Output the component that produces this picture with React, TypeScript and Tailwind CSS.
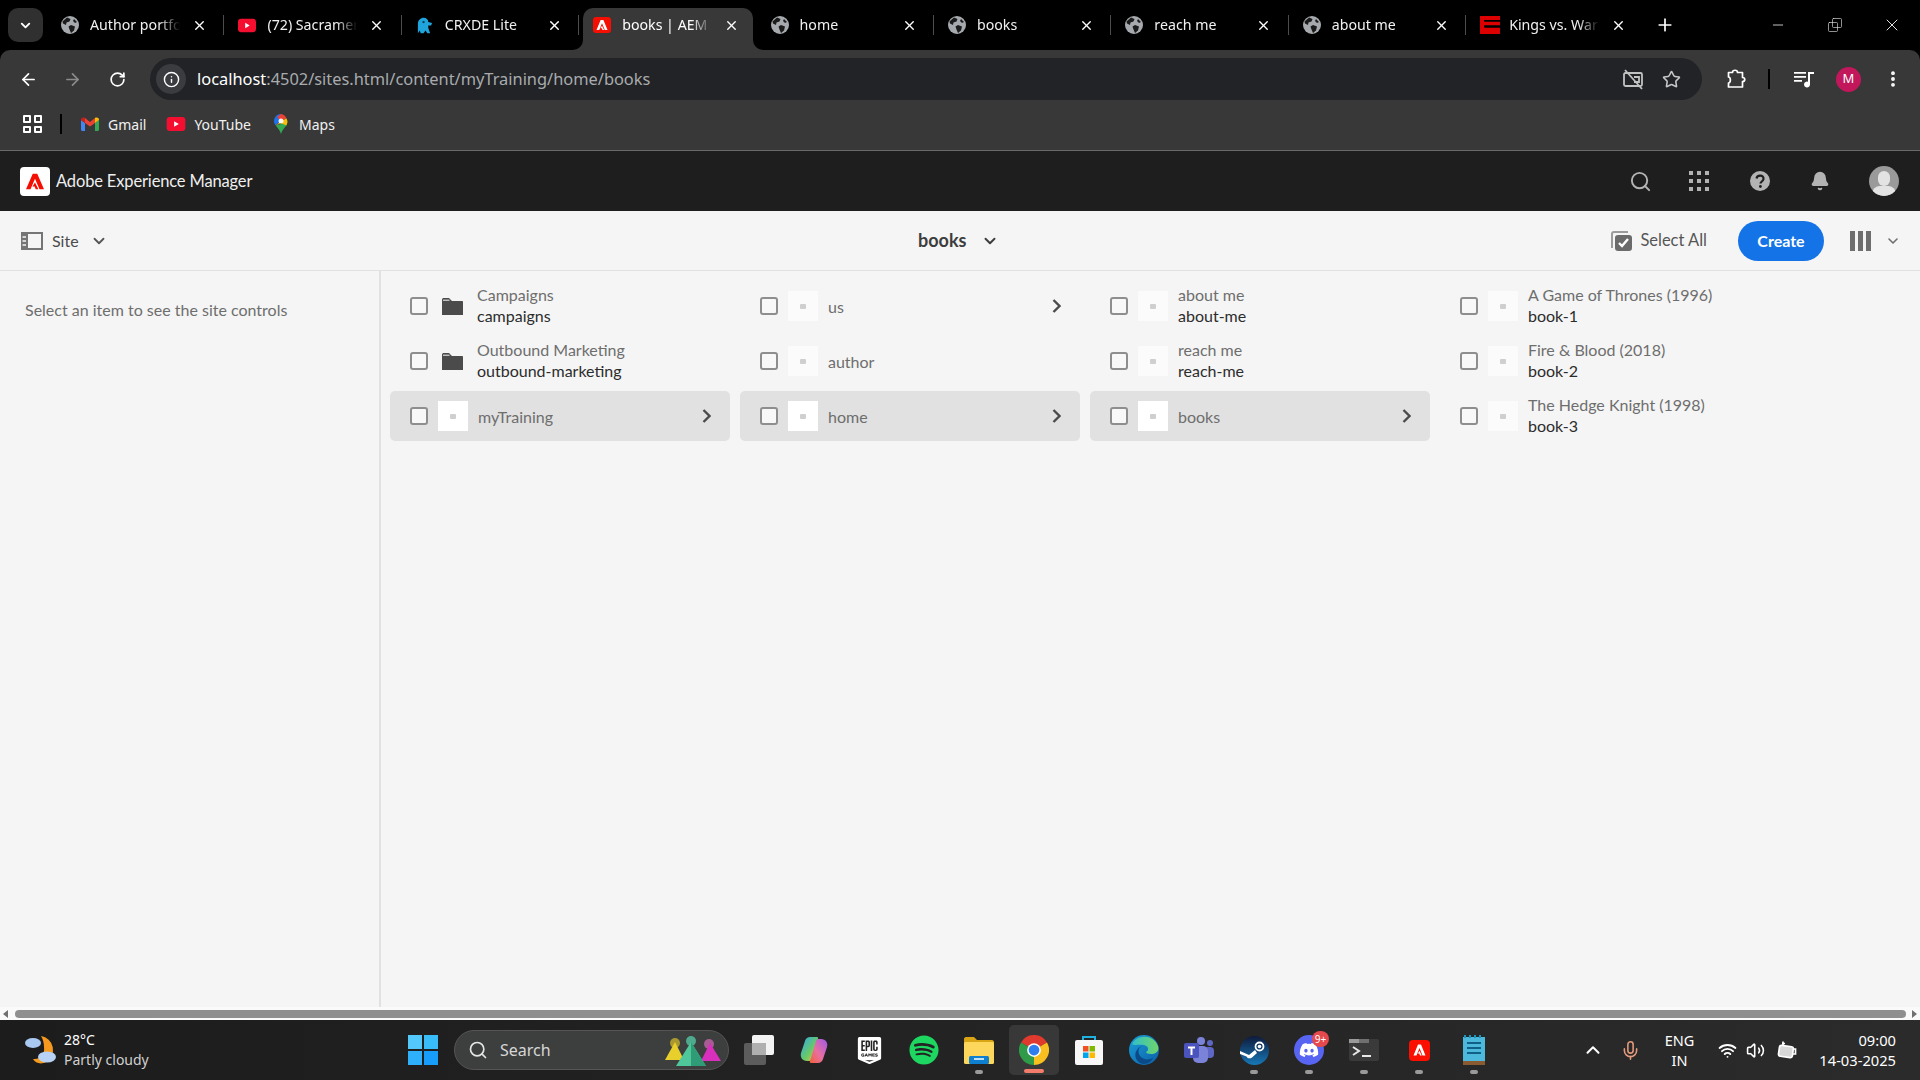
import { ArrowLeft, ArrowRight, ChevronDown, ChevronUp, Info, Mic, Minus, Plus, RotateCw, Search, Star, Volume2, Wifi, X, Bell, EllipsisVertical, Square } from "lucide-react";
import { FaDiscord, FaSpotify } from "react-icons/fa";
import { SiEpicgames } from "react-icons/si";

const ADOBE = "M9 1h6l9 22h-6L12 8 6 23H0ZM12 13.500 16.500 23H13l-1.500-4h-3Z";

function Globe() {
  return (
    <svg width="18" height="18" viewBox="0 0 18 18">
      <circle cx="9" cy="9" r="9" fill="#a6a9ad" />
      <path d="M6 1.5 9.5 3 8.5 5.5 5.5 6.5 5 9 2 7.5 1.5 5.5ZM10 9l4 1.5-1 4-3 2.5-1.5-3.5L7.5 10.5ZM13 3l3 3-2 1-2-2Z" fill="#1b1b1b" />
    </svg>
  );
}

function YouTubeIcon({ w = 18, h = 15 }: { w?: number; h?: number }) {
  return (
    <svg width={w} height={h} viewBox="0 0 20 15">
      <rect width="20" height="15" rx="3.5" fill="#f40f30" />
      <path d="M8 4.5v6l5-3z" fill="#fff" />
    </svg>
  );
}

function CrxIcon() {
  return (
    <svg width="17" height="17" viewBox="0 0 18 20" preserveAspectRatio="none">
      <path d="M2 19V8c0-4 3-7 6-7s5 2 5 5l4 1-1 3-3 0v3l2 6h-3l-2-3-2 3H5l-1-3z" fill="#1fa4dc" />
      <circle cx="8" cy="6" r="1.3" fill="#0b3a52" />
    </svg>
  );
}

function AdobeFavicon() {
  return (
    <svg width="18" height="16" viewBox="0 0 18 16">
      <rect width="18" height="16" rx="3" fill="#f40f02" />
      <path transform="translate(3.500 2.500) scale(.46)" d={ADOBE} fill="#fff" />
    </svg>
  );
}

function EspnIcon() {
  return (
    <svg width="20" height="18" viewBox="0 0 20 18">
      <path d="M0 0h20v4H5v1.500h15v4H5v2h15v6.500H0Z" fill="#d00" />
      <path d="M4 4h16v1.500H4zM4 9.500h16v2H4z" fill="#000" />
    </svg>
  );
}

const tabs = [
  { title: "Author portfolio", icon: <Globe /> },
  { title: "(72) Sacramento", icon: <YouTubeIcon /> },
  { title: "CRXDE Lite", icon: <CrxIcon /> },
  { title: "books | AEM Sites", icon: <AdobeFavicon />, active: true },
  { title: "home", icon: <Globe /> },
  { title: "books", icon: <Globe /> },
  { title: "reach me", icon: <Globe /> },
  { title: "about me", icon: <Globe /> },
  { title: "Kings vs. Warriors", icon: <EspnIcon /> },
];

function Tab({ title, icon, active, last }: { title: string; icon: React.ReactNode; active?: boolean; last: boolean }) {
  return (
    <div className={`relative flex h-[42px] w-[177.4px] shrink-0 items-center pb-[8px] pl-[14px] ${active ? "text-white" : "text-[#f1f1f1]"}`}>
      {active && (
        <>
          <div className="absolute inset-y-0 left-[4px] right-[4px] rounded-t-[10px] bg-[#383838]" />
          <svg className="absolute bottom-0 left-[-6px]" width="10" height="10" viewBox="0 0 10 10"><path d="M10 0V10H0A10 10 0 0 0 10 0Z" fill="#383838" /></svg>
          <svg className="absolute bottom-0 right-[-6px]" width="10" height="10" viewBox="0 0 10 10"><path d="M0 0V10H10A10 10 0 0 1 0 0Z" fill="#383838" /></svg>
        </>
      )}
      <div className="relative flex w-[22px] shrink-0 items-center">{icon}</div>
      <div className="relative ml-[7px] w-[92px] overflow-hidden whitespace-nowrap text-[14.2px] [mask-image:linear-gradient(to_right,black_75%,transparent_98%)]">{title}</div>
      <X size={15} strokeWidth={2.2} className="relative ml-[10px] text-white" />
      {!last && !active && <div className="absolute right-0 top-[7px] h-[20px] w-px bg-[#4d4d4d]" />}
    </div>
  );
}

function TopBars() {
  return (
    <div className="bg-black">
      <div className="flex h-[50px] items-end">
        <div className="mb-[8px] ml-[8px] mr-[4px] flex h-[34px] w-[35px] items-center justify-center rounded-[10px] bg-[#303030]">
          <ChevronDown size={15} strokeWidth={3} className="text-white" />
        </div>
        {tabs.map((t, i) => (
          <Tab key={i} title={t.title} icon={t.icon} active={t.active} last={i === tabs.length - 1} />
        ))}
        <Plus size={20} strokeWidth={2} className="mb-[15px] ml-[11px] text-white" />
        <div className="mb-[15px] ml-auto flex items-center text-[#e0e0e0]">
          <Minus size={16} strokeWidth={1.3} className="mr-[1px]" />
          <div className="relative ml-[40px] h-[16px] w-[16px]">
            <Square size={12} strokeWidth={1.3} className="absolute bottom-0 left-0" />
            <Square size={12} strokeWidth={1.3} className="absolute right-0 top-0" />
          </div>
          <X size={20} strokeWidth={1.2} className="ml-[39px] mr-[18px]" />
        </div>
      </div>
      <div className="rounded-t-[10px] bg-[#383838]">
        <div className="flex h-[50px] items-end">
          <div className="flex h-[50px] w-[150px] items-center pl-[19px] pt-[8px] text-white">
            <ArrowLeft size={19} strokeWidth={2.2} />
            <ArrowRight size={19} strokeWidth={2.2} className="ml-[25px] text-[#8b8b8b]" />
            <RotateCw size={17} strokeWidth={2.4} className="ml-[27px]" />
          </div>
          <div className="flex h-[42px] w-[1552px] items-center rounded-full bg-[#212326] pl-[6px] pr-[21px]">
            <div className="flex h-[30px] w-[30px] items-center justify-center rounded-full bg-[#3a3c40]">
              <Info size={17} strokeWidth={2} className="text-white" />
            </div>
            <div className="ml-[11px] text-[16.4px] text-[#a9abae]">
              <span className="text-white">localhost</span>:4502/sites.html/content/myTraining/home/books
            </div>
            <svg className="ml-auto" width="22" height="22" viewBox="0 0 22 22" fill="none" stroke="#c2c2c2" strokeWidth="1.8">
              <rect x="2" y="5" width="18" height="13" rx="1.500" />
              <path d="M12 14h5V9h-5" />
              <path d="M3 2l17 19" />
            </svg>
            <Star size={19} strokeWidth={2} className="ml-[18px] text-[#c7c7c7]" />
          </div>
          <div className="flex h-[50px] flex-1 items-center pl-[25px] pt-[8px] text-white">
            <svg width="20" height="20" viewBox="0 0 20 20" fill="none" stroke="#fff" strokeWidth="1.700">
              <path d="M1.500 3.500h4c0-3 5-3 5 0h5v5c3 0 3 4 0 4v5.500h-14v-4c2.500 0 2.500-6 0-6z" strokeLinejoin="round" />
            </svg>
            <div className="ml-[21px] h-[20px] w-[2px] bg-black" />
            <svg className="ml-[24px]" width="20" height="18" viewBox="0 0 20 18" fill="#fff">
              <path d="M0 2h12v1.700H0zM0 6h12v1.700H0zM0 10h8v1.700H0zM14 2h6v2h-4v10.500a3 3 0 1 1-2-2.800z" />
            </svg>
            <div className="ml-[22px] flex h-[25px] w-[25px] items-center justify-center rounded-full bg-[#c2185b] text-[13px] text-white">M</div>
            <EllipsisVertical size={20} strokeWidth={2.6} className="ml-[22px]" />
          </div>
        </div>
        <div className="flex h-[50px] items-center pb-[2px] text-[14px] text-[#f1f1f1]">
          <div className="ml-[23px] grid h-[18px] w-[19px] grid-cols-2 gap-[3px]">
            <div className="rounded-[1px] border-2 border-white" />
            <div className="rounded-[1px] border-2 border-white" />
            <div className="rounded-[1px] border-2 border-white" />
            <div className="rounded-[1px] border-2 border-white" />
          </div>
          <div className="ml-[18px] h-[20px] w-[2px] bg-black" />
          <svg className="ml-[19px]" width="18" height="14" viewBox="0 0 18 14">
            <path d="M0 3v9.500c0 .8.700 1.500 1.500 1.500H4V6z" fill="#4285f4" />
            <path d="M14 6v8h2.500c.8 0 1.500-.7 1.500-1.500V3z" fill="#34a853" />
            <path d="M4 6 9 9.500 14 6V1L9 5 4 1z" fill="#ea4335" />
            <path d="M14 1v5l4-3c0-2.500-2.500-3-4-2z" fill="#fbbc04" />
            <path d="M4 1v5L0 3c0-2.500 2.500-3 4-2z" fill="#c5221f" />
          </svg>
          <span className="ml-[9px]">Gmail</span>
          <div className="ml-[20px]"><YouTubeIcon w={20} h={14} /></div>
          <span className="ml-[8px]">YouTube</span>
          <svg className="ml-[23px]" width="14" height="20" viewBox="0 0 14 20">
            <path d="M7 0a7 7 0 0 0-5.300 11.500L7 6z" fill="#1a73e8" />
            <path d="M7 0 3 3l4 4 5.500-2.500A7 7 0 0 0 7 0z" fill="#ea4335" />
            <path d="M12.500 4.500 7 10l-5.300 1.500C4 14.500 6 16 7 20c1-4 3-5.500 5.300-8.500a7 7 0 0 0 .2-7z" fill="#34a853" />
            <path d="M1.700 11.500 7 7l5.500-2.500a7 7 0 0 1-.2 7L7 9z" fill="#fbbc04" />
            <circle cx="7" cy="7" r="2.500" fill="#f7f7f7" />
          </svg>
          <span className="ml-[11px]">Maps</span>
        </div>
      </div>
    </div>
  );
}

function AemHeader() {
  return (
    <div className="flex h-[61px] items-center border-t border-[#6a6a6a] bg-[#1e1e1e] pl-[20px] font-['Lato',sans-serif] text-white">
      <div className="flex h-[29px] w-[30px] items-center justify-center rounded-[4px] bg-white">
        <svg width="18" height="17" viewBox="0 0 24 24" fill="#f40f02" preserveAspectRatio="none"><path d={ADOBE} /></svg>
      </div>
      <span className="ml-[6px] text-[16.5px] tracking-[-0.15px] text-[#efefef]">Adobe Experience Manager</span>
      <div className="ml-auto flex items-center text-[#b3b3b3]">
        <Search size={23} strokeWidth={2} />
        <div className="ml-[37px] grid grid-cols-3 gap-[4px]">
          {[0, 1, 2, 3, 4, 5, 6, 7, 8].map((i) => (
            <div key={i} className="h-[4px] w-[4px] bg-[#b3b3b3]" />
          ))}
        </div>
        <svg className="ml-[41px]" width="20" height="20" viewBox="0 0 20 20">
          <circle cx="10" cy="10" r="10" fill="#b3b3b3" />
          <path d="M6.500 7.500C7 3.500 14 3.500 13.500 8c-.3 2.500-3 2.500-3 4.500" fill="none" stroke="#1e1e1e" strokeWidth="2.200" />
          <circle cx="10.400" cy="15.500" r="1.400" fill="#1e1e1e" />
        </svg>
        <Bell size={20} fill="#b3b3b3" strokeWidth={2} className="ml-[40px]" />
        <div className="relative ml-[39px] mr-[21px] h-[30px] w-[30px] overflow-hidden rounded-full bg-[#9a9a9a]">
          <div className="absolute left-[9px] top-[5px] h-[15px] w-[12px] rounded-full bg-[#e3e3e3]" />
          <div className="absolute left-[3px] top-[20px] h-[16px] w-[24px] rounded-full bg-[#e3e3e3]" />
        </div>
      </div>
    </div>
  );
}

function AemToolbar() {
  return (
    <div className="flex h-[60px] items-center border-b border-[#e1e1e1] bg-[#f5f5f5] font-['Lato',sans-serif] text-[16px] text-[#4b4b4b]">
      <div className="flex w-[800px] items-center pl-[21px]">
        <svg width="22" height="18" viewBox="0 0 22 18">
          <rect x="1" y="1" width="20" height="16" fill="none" stroke="#757575" strokeWidth="2" />
          <rect x="0" y="0" width="7" height="18" fill="#757575" />
          <path d="M1.500 5h3.500M1.500 9h3.500M1.500 13h3.500" stroke="#f5f5f5" strokeWidth="1.500" />
        </svg>
        <span className="ml-[9px]">Site</span>
        <ChevronDown size={18} strokeWidth={2.4} className="ml-[11px] text-[#555]" />
      </div>
      <div className="ml-[118px] flex items-center text-[18px] font-bold text-[#3d3d3d]">
        <span>books</span>
        <ChevronDown size={18} strokeWidth={2.6} className="ml-[15px]" />
      </div>
      <div className="ml-auto flex items-center">
        <svg width="21" height="20" viewBox="0 0 21 20">
          <path d="M1 17V3c0-1.200.8-2 2-2h14" fill="none" stroke="#9b9b9b" strokeWidth="2" />
          <rect x="4" y="4" width="17" height="16" rx="3" fill="#6b6b6b" />
          <path d="M8 12l3 3 6-7" fill="none" stroke="#fff" strokeWidth="2.400" />
        </svg>
        <span className="ml-[8px] text-[16.5px] text-[#555]">Select All</span>
        <div className="ml-[31px] flex h-[40px] w-[86px] items-center justify-center rounded-full bg-[#1473e6] text-[16px] font-bold text-white">Create</div>
        <div className="ml-[26px] flex h-[20px] w-[21px] justify-between">
          <div className="w-[5px] bg-[#6e6e6e]" />
          <div className="w-[5px] bg-[#6e6e6e]" />
          <div className="w-[5px] bg-[#6e6e6e]" />
        </div>
        <ChevronDown size={16} strokeWidth={2.4} className="ml-[14px] mr-[19px] text-[#6e6e6e]" />
      </div>
    </div>
  );
}

type Item = { title: string; name?: string; folder?: boolean; active?: boolean; more?: boolean };

const columns: Item[][] = [
  [
    { title: "Campaigns", name: "campaigns", folder: true },
    { title: "Outbound Marketing", name: "outbound-marketing", folder: true },
    { title: "myTraining", active: true, more: true },
  ],
  [
    { title: "us", more: true },
    { title: "author" },
    { title: "home", active: true, more: true },
  ],
  [
    { title: "about me", name: "about-me" },
    { title: "reach me", name: "reach-me" },
    { title: "books", active: true, more: true },
  ],
  [
    { title: "A Game of Thrones (1996)", name: "book-1" },
    { title: "Fire & Blood (2018)", name: "book-2" },
    { title: "The Hedge Knight (1998)", name: "book-3" },
  ],
];

function Row({ item }: { item: Item }) {
  return (
    <div className={`relative flex h-[50px] items-center rounded-[5px] pl-[20px] ${item.active ? "bg-[#e1e1e1]" : ""}`}>
      <div className="h-[18px] w-[18px] rounded-[3px] border-2 border-[#8e8e8e] bg-[#f8f8f8]" />
      {item.folder ? (
        <svg className="ml-[14px] mr-[4px]" width="21" height="18" viewBox="0 0 21 18">
          <path d="M0 3c0-1.500.7-2 2-2h5l3 3h10c.6 0 1 .4 1 1v13H0z" fill="#4b4b4b" />
          <path d="M1 3.200h6.500" stroke="#f5f5f5" strokeWidth="1" />
        </svg>
      ) : (
        <div className={`ml-[10px] flex h-[30px] w-[30px] items-center justify-center ${item.active ? "bg-white" : "bg-[#fbfbfb]"}`}>
          <div className="h-[5px] w-[6px] rounded-[1px] bg-[#cfcfcf]" />
        </div>
      )}
      <div className={`ml-[10px] text-[16px] leading-[21px] ${item.name ? "-mt-[2px]" : ""}`}>
        <div className="text-[#6e6e6e]">{item.title}</div>
        {item.name && <div className="text-[#2c2c2c]">{item.name}</div>}
      </div>
      {item.more && (
        <svg className="ml-auto mr-[19px]" width="9" height="14" viewBox="0 0 9 14" fill="none" stroke="#4b4b4b" strokeWidth="2.400">
          <path d="M1.500 1l6 6-6 6" />
        </svg>
      )}
    </div>
  );
}

function ColumnView() {
  return (
    <div className="flex min-h-0 flex-1 bg-[#f5f5f5] font-['Lato',sans-serif]">
      <div className="w-[381px] border-r-2 border-[#e1e1e1] pl-[25px] pt-[28px] text-[16px] leading-[22px] text-[#6e6e6e]">
        Select an item to see the site controls
      </div>
      <div className="flex gap-[10px] pl-[9px] pt-[10px]">
        {columns.map((col, i) => (
          <div key={i} className="flex w-[340px] flex-col gap-[5px]">
            {col.map((item, j) => (
              <Row key={j} item={item} />
            ))}
          </div>
        ))}
      </div>
    </div>
  );
}

function ScrollBar() {
  return (
    <div className="flex h-[13px] items-center bg-[#fafafa]">
      <div className="ml-[3px] h-0 w-0 border-y-[4px] border-r-[5px] border-y-transparent border-r-[#707070]" />
      <div className="ml-[7px] h-[8px] flex-1 rounded-full bg-[#8f8f8f]" />
      <div className="ml-[6px] mr-[3px] h-0 w-0 border-y-[4px] border-l-[5px] border-y-transparent border-l-[#707070]" />
    </div>
  );
}

function Weather() {
  return (
    <svg width="32" height="32" viewBox="0 0 32 32">
      <path d="M17 2a14 14 0 0 1 5 26c-5 3-11 1-13-3 8 1 12-6 11-12 0-4-1-8-3-11z" fill="#f59a1f" />
      <ellipse cx="9" cy="9" rx="8" ry="5" fill="#a9c8f2" />
      <ellipse cx="23" cy="23" rx="9" ry="5.500" fill="#b8d2f5" />
    </svg>
  );
}

function WinLogo() {
  return (
    <div className="grid h-[30px] w-[30px] grid-cols-2 gap-[2px]">
      <div className="bg-[#53c8fb]" />
      <div className="bg-[#38bdf9]" />
      <div className="bg-[#2fb0fa]" />
      <div className="bg-[#169efa]" />
    </div>
  );
}

function Pyramids() {
  return (
    <svg width="58" height="32" viewBox="0 0 58 32">
      <circle cx="11" cy="9" r="5" fill="#a8982f" />
      <path d="M11 8 1 26h19z" fill="#e8cf2b" />
      <circle cx="45" cy="10" r="5" fill="#a85c94" />
      <path d="M46 9 37 27h20z" fill="#d92fbd" />
      <circle cx="27" cy="7" r="5" fill="#4fa98c" />
      <path d="M27 8 12 32h30z" fill="#4fc79b" />
      <path d="M27 8 27 32h15z" fill="#2f9c77" />
    </svg>
  );
}

function TaskView() {
  return (
    <div className="relative h-[30px] w-[30px]">
      <div className="absolute left-0 top-[8px] h-[22px] w-[22px] rounded-[2px] bg-[#5c5c5c]" />
      <div className="absolute right-0 top-0 h-[20px] w-[22px] rounded-[2px] bg-[#f3f3f3]" />
      <div className="absolute left-[8px] top-[8px] h-[12px] w-[14px] bg-[#b0b0b0]" />
    </div>
  );
}

function Copilot() {
  return (
    <svg width="28" height="28" viewBox="0 0 28 28">
      <defs>
        <linearGradient id="cp1" x1="0" y1="0" x2="1" y2="1">
          <stop offset="0" stopColor="#2fa8f0" />
          <stop offset=".55" stopColor="#66c96a" />
          <stop offset="1" stopColor="#f2c23c" />
        </linearGradient>
        <linearGradient id="cp2" x1="1" y1="0" x2="0" y2="1">
          <stop offset="0" stopColor="#a058e8" />
          <stop offset=".55" stopColor="#e86fa0" />
          <stop offset="1" stopColor="#f2603c" />
        </linearGradient>
      </defs>
      <path d="M10 1h7c1 0 1.500 1 1 2l-6 20c-.5 1.500-2 2-3 2H7c-5 0-7-4-6-8l4-12c.6-2.500 3-4 5-4z" fill="url(#cp1)" />
      <path d="M18 27h-7c-1 0-1.500-1-1-2l6-20c.5-1.500 2-2 3-2h2c5 0 7 4 6 8l-4 12c-.6 2.500-3 4-5 4z" fill="url(#cp2)" />
    </svg>
  );
}

function FolderApp() {
  return (
    <svg width="30" height="27" viewBox="0 0 30 27">
      <path d="M0 2c0-1 .8-2 2-2h8l3 3h15c1 0 2 1 2 2v2H0z" fill="#d9a514" />
      <rect x="0" y="5" width="30" height="22" rx="1.500" fill="#fcd75c" />
      <rect x="5" y="19" width="20" height="8" rx="1.500" fill="#0f7fd0" />
      <rect x="10" y="21" width="10" height="2" fill="#bfe0f7" />
    </svg>
  );
}

function Chrome() {
  return (
    <svg width="30" height="30" viewBox="0 0 24 24">
      <path d="M12 12 1.600 6A12 12 0 0 1 22.400 6Z" fill="#e0392d" />
      <path d="M12 12 22.400 6A12 12 0 0 1 12 24Z" fill="#f7bf1f" />
      <path d="M12 12 12 24A12 12 0 0 1 1.600 6Z" fill="#2f9a47" />
      <circle cx="12" cy="12" r="5.500" fill="#fff" />
      <circle cx="12" cy="12" r="4.300" fill="#2f7ef0" />
    </svg>
  );
}

function Store() {
  return (
    <svg width="30" height="30" viewBox="0 0 30 30">
      <path d="M9 6V2h12v4" fill="none" stroke="#1fb2e0" strokeWidth="2" />
      <rect x="1" y="5" width="28" height="25" rx="2" fill="#f7f7f7" />
      <rect x="9" y="11" width="5.500" height="5.500" fill="#f25022" />
      <rect x="15.500" y="11" width="5.500" height="5.500" fill="#7fba00" />
      <rect x="9" y="17.500" width="5.500" height="5.500" fill="#00a4ef" />
      <rect x="15.500" y="17.500" width="5.500" height="5.500" fill="#ffb900" />
    </svg>
  );
}

function Edge() {
  return (
    <svg width="30" height="30" viewBox="0 0 30 30">
      <defs>
        <linearGradient id="edge1" x1="0" y1="0" x2="1" y2="1">
          <stop offset="0" stopColor="#1a9fd8" />
          <stop offset="1" stopColor="#0c5ea8" />
        </linearGradient>
        <linearGradient id="edge2" x1="0" y1="0" x2="1" y2="0">
          <stop offset="0" stopColor="#32c0c8" />
          <stop offset="1" stopColor="#6fd46a" />
        </linearGradient>
      </defs>
      <circle cx="15" cy="15" r="15" fill="url(#edge1)" />
      <path d="M3 9C7 0 24-2 29 11c1.500 5-2 8-7 8-3 0-5-1-5-2 3-1 3-6-2-7C10 9 5 11 3 9z" fill="url(#edge2)" />
      <path d="M14 11c-5 1-6 7-2 11 3 3 8 3 12 1-3 6-9 7-13 5-5-3-6-9-3-13 2-3 4-4 6-4z" fill="#0b4a86" />
    </svg>
  );
}

function Teams() {
  return (
    <svg width="30" height="26" viewBox="0 0 30 26">
      <circle cx="17" cy="4" r="4" fill="#7b83d9" />
      <circle cx="26" cy="6" r="3" fill="#5f67c4" />
      <rect x="20" y="10" width="10" height="11" rx="4" fill="#5f67c4" />
      <rect x="9" y="9" width="15" height="17" rx="5" fill="#7b83d9" />
      <rect x="0" y="6" width="15" height="15" rx="2" fill="#4b53bc" />
      <path d="M4 9.500h7v2H8.500V18h-2v-6.500H4z" fill="#fff" />
    </svg>
  );
}

function Steam() {
  return (
    <svg width="29" height="29" viewBox="0 0 29 29">
      <defs>
        <linearGradient id="stm" x1="0" y1="0" x2="0" y2="1">
          <stop offset="0" stopColor="#0f1a3a" />
          <stop offset="1" stopColor="#1678b8" />
        </linearGradient>
      </defs>
      <circle cx="14.500" cy="14.500" r="14.500" fill="url(#stm)" />
      <circle cx="19.500" cy="10.500" r="4" fill="none" stroke="#fff" strokeWidth="1.800" />
      <circle cx="19.500" cy="10.500" r="1.800" fill="#fff" />
      <path d="M0 15l9 4 6-5 2 3-5 4.500c-2 1.500-4.500 1-5.500-1L0 18z" fill="#fff" />
    </svg>
  );
}

function Terminal() {
  return (
    <svg width="30" height="22" viewBox="0 0 30 22">
      <rect width="30" height="22" rx="2" fill="#3a3a3a" />
      <rect width="20" height="4" fill="#9a9a9a" />
      <rect x="10" width="10" height="4" fill="#707070" />
      <path d="M4 8l6 4-6 4" fill="none" stroke="#e8e8e8" strokeWidth="2" />
      <path d="M13 17h9" stroke="#e8e8e8" strokeWidth="2" />
    </svg>
  );
}

function AcrobatApp() {
  return (
    <div className="flex h-[21px] w-[21px] items-center justify-center rounded-[4px] bg-[#fa0f00]">
      <svg width="13" height="12" viewBox="0 0 24 24" fill="#fff"><path d={ADOBE} /></svg>
    </div>
  );
}

function Notepad() {
  return (
    <svg width="22" height="30" viewBox="0 0 22 30">
      <rect y="2" width="22" height="26" fill="#4cb8dc" />
      <rect y="26" width="22" height="4" fill="#8a5a30" />
      <path d="M4 8h14M4 13h14M4 18h14" stroke="#0f5f86" strokeWidth="2" />
      <path d="M2 3V0M7 3V0M12 3V0M17 3V0" stroke="#1b95bd" strokeWidth="2" />
    </svg>
  );
}

function Battery() {
  return (
    <svg width="20" height="20" viewBox="0 0 20 20" fill="none" stroke="#fff" strokeWidth="1.700">
      <rect x="2" y="6" width="14" height="11" rx="2" transform="rotate(8 9 11)" fill="#d8d8d8" />
      <path d="M6 5V1.500M5 3.500h3" />
      <path d="M16 9h2.500v5H16" />
    </svg>
  );
}

const apps = [
  { el: <TaskView /> },
  { el: <Copilot /> },
  { el: <SiEpicgames size={27} className="text-white" /> },
  { el: <FaSpotify size={30} className="text-[#1ed760]" /> },
  { el: <FolderApp />, dot: true },
  { el: <Chrome />, active: true },
  { el: <Store /> },
  { el: <Edge /> },
  { el: <Teams /> },
  { el: <Steam />, dot: true },
  {
    el: (
      <div className="relative flex h-[30px] w-[30px] items-center justify-center rounded-full bg-[#5865f2]">
        <FaDiscord size={20} className="text-white" />
        <div className="absolute -right-[5px] -top-[4px] flex h-[16px] w-[17px] items-center justify-center rounded-full bg-[#e5484d] text-[10px] text-white">9+</div>
      </div>
    ),
    dot: true,
  },
  { el: <Terminal />, dot: true },
  { el: <AcrobatApp />, dot: true },
  { el: <Notepad />, dot: true },
];

function Taskbar() {
  return (
    <div className="flex h-[60px] items-center bg-gradient-to-r from-[#1c1c1c] to-[#2b2b2b] font-['Noto_Sans',sans-serif] text-white">
      <div className="flex w-[408px] items-center pl-[24px]">
        <Weather />
        <div className="ml-[8px] text-[14px] leading-[20px]">
          <div>28°C</div>
          <div className="text-[#d0d0d0]">Partly cloudy</div>
        </div>
      </div>
      <WinLogo />
      <div className="ml-[16px] flex h-[40px] w-[275px] items-center rounded-full border border-[#555] bg-[#3d3f3e] pl-[13px]">
        <Search size={20} strokeWidth={2} className="text-[#e5e5e5]" />
        <span className="ml-[12px] text-[16px] text-[#d6d6d6]">Search</span>
        <div className="ml-auto mr-[6px]"><Pyramids /></div>
      </div>
      <div className="ml-[2.500px] flex">
        {apps.map((a, i) => (
          <div key={i} className="relative flex h-[50px] w-[55px] items-center justify-center">
            {a.active && <div className="absolute inset-y-0 left-[2.500px] right-[2.500px] rounded-[5px] bg-[#383838]" />}
            <div className="relative">{a.el}</div>
            {a.dot && <div className="absolute bottom-[1px] left-[23.500px] h-[4px] w-[8px] rounded-full bg-[#9a9a9a]" />}
            {a.active && <div className="absolute bottom-[2px] left-[17.500px] h-[4px] w-[20px] rounded-full bg-[#f47c6a]" />}
          </div>
        ))}
      </div>
      <div className="ml-auto flex items-center">
        <ChevronUp size={22} strokeWidth={2.200} />
        <Mic size={21} strokeWidth={1.800} className="ml-[16px] text-[#e39a7c]" />
        <div className="ml-[24px] text-center text-[14.500px] leading-[20px]">
          <div>ENG</div>
          <div>IN</div>
        </div>
        <Wifi size={19} strokeWidth={2.400} className="ml-[24px]" />
        <Volume2 size={19} strokeWidth={2} className="ml-[9px]" />
        <div className="ml-[12px]"><Battery /></div>
        <div className="ml-[22px] mr-[24px] text-right text-[14.700px] leading-[20px]">
          <div>09:00</div>
          <div>14-03-2025</div>
        </div>
      </div>
    </div>
  );
}

export default function App() {
  return (
    <div className="flex h-screen w-screen flex-col overflow-hidden font-['Noto_Sans',sans-serif]">
      <TopBars />
      <AemHeader />
      <AemToolbar />
      <ColumnView />
      <ScrollBar />
      <Taskbar />
    </div>
  );
}
